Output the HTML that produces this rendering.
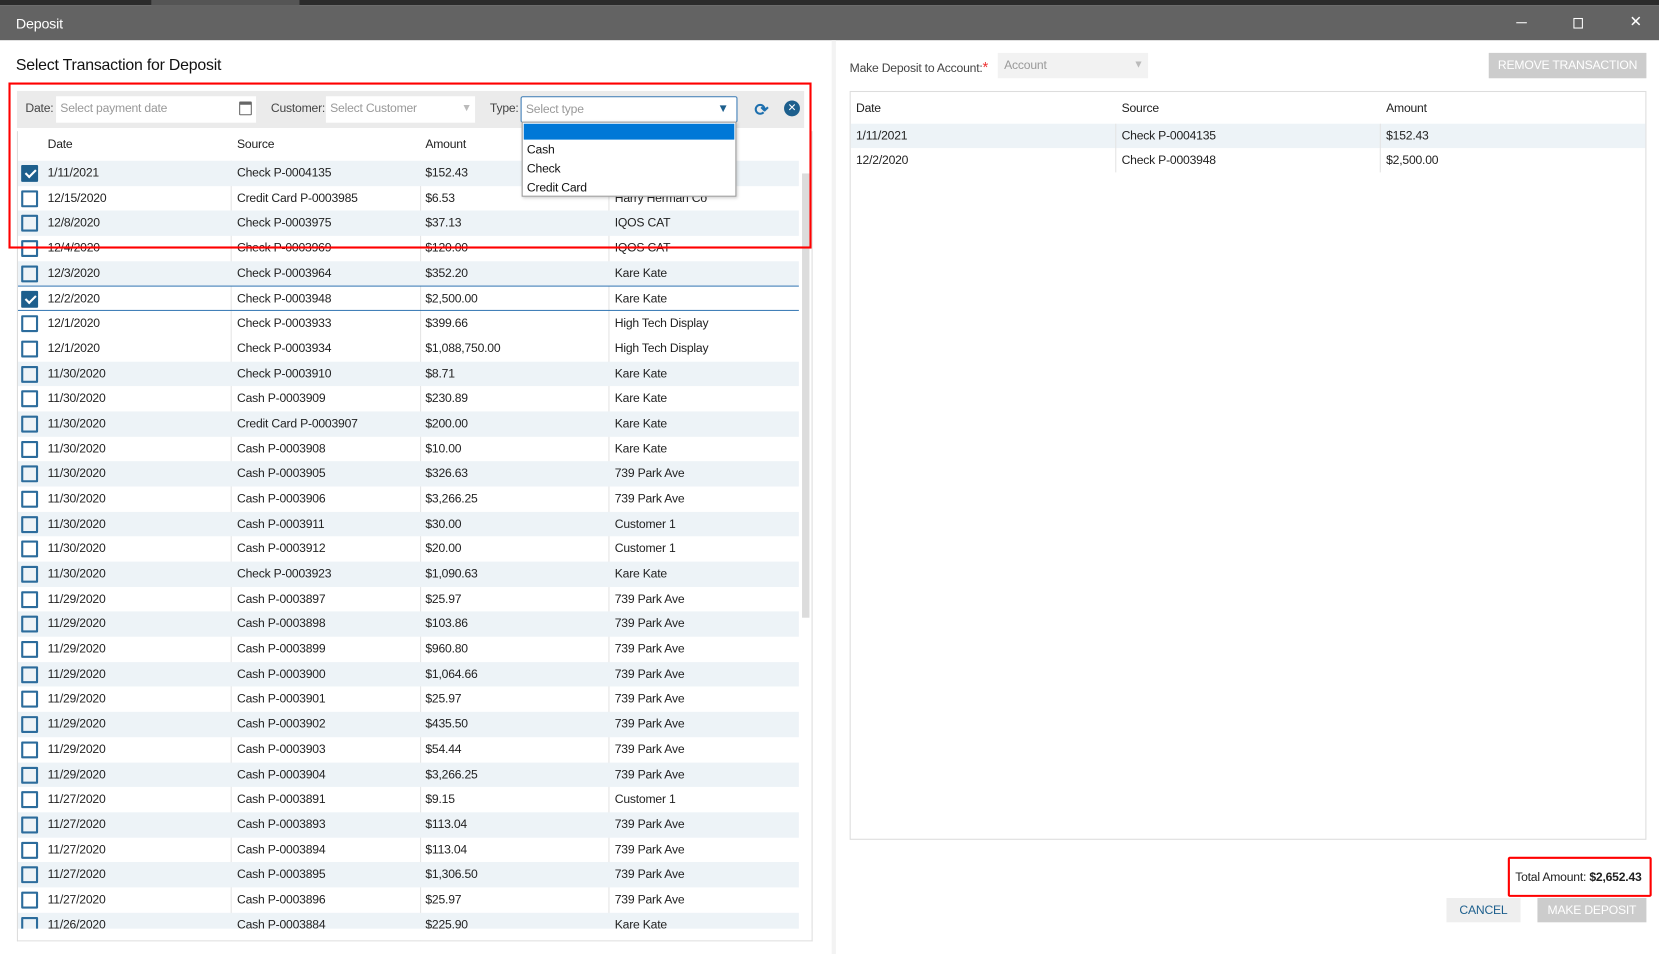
<!DOCTYPE html>
<html><head><meta charset="utf-8"><style>
*{box-sizing:border-box;margin:0;padding:0}
body{width:1659px;height:954px;overflow:hidden;background:#fff;font-family:"Liberation Sans",sans-serif;color:#222}
#s{position:absolute;left:0;top:0;width:1568px;height:902px;transform:scale(1.0581,1.0577);transform-origin:0 0;font-size:11.5px;letter-spacing:-0.2px}
.a{position:absolute}
.row{height:23.69px;display:flex;align-items:center;position:relative;white-space:nowrap}
.row.o{background:#edf3f7}
.row span{position:absolute;top:6px}
.c1{left:28px}.c2{left:207px}.c3{left:385px}.c4{left:564px}
.cb{position:absolute;left:3px;top:4px;width:16px;height:16px;border:2px solid #2c6c9c;border-radius:1px}
.cb.k{background:#1d5f8d;border-color:#1d5f8d}
.cb.k:after{content:"";position:absolute;left:4px;top:0px;width:4px;height:8px;border:solid #fff;border-width:0 2px 2px 0;transform:rotate(45deg)}
.vl{position:absolute;top:0;bottom:0;width:1px;background:#e4e4e4}
</style></head><body><div id="s">
<div class="a" style="left:0;top:0;width:1568px;height:5px;background:#2b2b2b"></div>
<div class="a" style="left:143px;top:0;width:140px;height:5px;background:#555"></div>
<div class="a" style="left:0;top:5px;width:1568px;height:33px;background:#636363"></div>
<div class="a" style="left:15px;top:15px;color:#fff;font-size:13.5px">Deposit</div>
<div class="a" style="left:1433px;top:21px;width:10px;height:1px;background:#fff"></div>
<div class="a" style="left:1487px;top:17px;width:9px;height:10px;border:1px solid #fff"></div>
<div class="a" style="left:1540px;top:12px;color:#fff;font-size:14px">✕</div>

<div class="a" style="left:15px;top:53px;font-size:15px;color:#111">Select Transaction for Deposit</div>
<div class="a" style="left:16px;top:86px;width:744px;height:35px;background:#ebebeb"></div>
<div class="a" style="left:24px;top:97px;color:#444">Date:</div>
<div class="a" style="left:53px;top:91px;width:189px;height:25px;background:#fff;color:#999;padding:6px 4px">Select payment date</div>
<div class="a" style="left:226px;top:96px;width:12px;height:13px;border:1.5px solid #666;border-top-width:3px;border-radius:1px"></div>
<div class="a" style="left:256px;top:97px;color:#444">Customer:</div>
<div class="a" style="left:308px;top:91px;width:141px;height:25px;background:#fff;color:#999;padding:6px 4px">Select Customer</div>
<div class="a" style="left:436px;top:97px;color:#bbb;font-size:10px">▼</div>
<div class="a" style="left:463px;top:97px;color:#444">Type:</div>
<div class="a" style="left:492px;top:91px;width:205px;height:25px;background:#fff;border:1px solid #3b7bb5;border-radius:2px;color:#999;padding:6px 4px">Select type</div>
<div class="a" style="left:678px;top:97px;color:#1d5f8d;font-size:11px">▼</div>
<div class="a" style="left:713px;top:94px;color:#1d6fae;font-size:16px;font-weight:bold">⟳</div>
<div class="a" style="left:741px;top:95px;width:15px;height:15px;border-radius:50%;background:#1d5f8d;color:#fff;font-size:10px;text-align:center;line-height:15px">✕</div>

<div class="a" style="left:16px;top:124px;width:752px;height:766px;border:1px solid #ddd;border-top:none;overflow:hidden">
<div class="a" style="left:28px;top:7px">Date</div>
<div class="a" style="left:207px;top:7px">Source</div>
<div class="a" style="left:385px;top:7px">Amount</div>
<div class="a" style="left:0;top:28px;width:738px">
<div class="vl" style="left:201px;height:740px"></div><div class="vl" style="left:380px;height:740px"></div><div class="vl" style="left:558px;height:740px"></div>
<div class="row o"><i class="cb k"></i><span class="c1">1/11/2021</span><span class="c2">Check P-0004135</span><span class="c3">$152.43</span></div>
<div class="row"><i class="cb"></i><span class="c1">12/15/2020</span><span class="c2">Credit Card P-0003985</span><span class="c3">$6.53</span><span class="c4">Harry Herman Co</span></div>
<div class="row o"><i class="cb"></i><span class="c1">12/8/2020</span><span class="c2">Check P-0003975</span><span class="c3">$37.13</span><span class="c4">IQOS CAT</span></div>
<div class="row"><i class="cb"></i><span class="c1">12/4/2020</span><span class="c2">Check P-0003969</span><span class="c3">$120.00</span><span class="c4">IQOS CAT</span></div>
<div class="row o"><i class="cb"></i><span class="c1">12/3/2020</span><span class="c2">Check P-0003964</span><span class="c3">$352.20</span><span class="c4">Kare Kate</span></div>
<div class="row" style="border-top:1px solid #3b7bb5;border-bottom:1px solid #3b7bb5"><i class="cb k"></i><span class="c1">12/2/2020</span><span class="c2">Check P-0003948</span><span class="c3">$2,500.00</span><span class="c4">Kare Kate</span></div>
<div class="row"><i class="cb"></i><span class="c1">12/1/2020</span><span class="c2">Check P-0003933</span><span class="c3">$399.66</span><span class="c4">High Tech Display</span></div>
<div class="row"><i class="cb"></i><span class="c1">12/1/2020</span><span class="c2">Check P-0003934</span><span class="c3">$1,088,750.00</span><span class="c4">High Tech Display</span></div>
<div class="row o"><i class="cb"></i><span class="c1">11/30/2020</span><span class="c2">Check P-0003910</span><span class="c3">$8.71</span><span class="c4">Kare Kate</span></div>
<div class="row"><i class="cb"></i><span class="c1">11/30/2020</span><span class="c2">Cash P-0003909</span><span class="c3">$230.89</span><span class="c4">Kare Kate</span></div>
<div class="row o"><i class="cb"></i><span class="c1">11/30/2020</span><span class="c2">Credit Card P-0003907</span><span class="c3">$200.00</span><span class="c4">Kare Kate</span></div>
<div class="row"><i class="cb"></i><span class="c1">11/30/2020</span><span class="c2">Cash P-0003908</span><span class="c3">$10.00</span><span class="c4">Kare Kate</span></div>
<div class="row o"><i class="cb"></i><span class="c1">11/30/2020</span><span class="c2">Cash P-0003905</span><span class="c3">$326.63</span><span class="c4">739 Park Ave</span></div>
<div class="row"><i class="cb"></i><span class="c1">11/30/2020</span><span class="c2">Cash P-0003906</span><span class="c3">$3,266.25</span><span class="c4">739 Park Ave</span></div>
<div class="row o"><i class="cb"></i><span class="c1">11/30/2020</span><span class="c2">Cash P-0003911</span><span class="c3">$30.00</span><span class="c4">Customer 1</span></div>
<div class="row"><i class="cb"></i><span class="c1">11/30/2020</span><span class="c2">Cash P-0003912</span><span class="c3">$20.00</span><span class="c4">Customer 1</span></div>
<div class="row o"><i class="cb"></i><span class="c1">11/30/2020</span><span class="c2">Check P-0003923</span><span class="c3">$1,090.63</span><span class="c4">Kare Kate</span></div>
<div class="row"><i class="cb"></i><span class="c1">11/29/2020</span><span class="c2">Cash P-0003897</span><span class="c3">$25.97</span><span class="c4">739 Park Ave</span></div>
<div class="row o"><i class="cb"></i><span class="c1">11/29/2020</span><span class="c2">Cash P-0003898</span><span class="c3">$103.86</span><span class="c4">739 Park Ave</span></div>
<div class="row"><i class="cb"></i><span class="c1">11/29/2020</span><span class="c2">Cash P-0003899</span><span class="c3">$960.80</span><span class="c4">739 Park Ave</span></div>
<div class="row o"><i class="cb"></i><span class="c1">11/29/2020</span><span class="c2">Cash P-0003900</span><span class="c3">$1,064.66</span><span class="c4">739 Park Ave</span></div>
<div class="row"><i class="cb"></i><span class="c1">11/29/2020</span><span class="c2">Cash P-0003901</span><span class="c3">$25.97</span><span class="c4">739 Park Ave</span></div>
<div class="row o"><i class="cb"></i><span class="c1">11/29/2020</span><span class="c2">Cash P-0003902</span><span class="c3">$435.50</span><span class="c4">739 Park Ave</span></div>
<div class="row"><i class="cb"></i><span class="c1">11/29/2020</span><span class="c2">Cash P-0003903</span><span class="c3">$54.44</span><span class="c4">739 Park Ave</span></div>
<div class="row o"><i class="cb"></i><span class="c1">11/29/2020</span><span class="c2">Cash P-0003904</span><span class="c3">$3,266.25</span><span class="c4">739 Park Ave</span></div>
<div class="row"><i class="cb"></i><span class="c1">11/27/2020</span><span class="c2">Cash P-0003891</span><span class="c3">$9.15</span><span class="c4">Customer 1</span></div>
<div class="row o"><i class="cb"></i><span class="c1">11/27/2020</span><span class="c2">Cash P-0003893</span><span class="c3">$113.04</span><span class="c4">739 Park Ave</span></div>
<div class="row"><i class="cb"></i><span class="c1">11/27/2020</span><span class="c2">Cash P-0003894</span><span class="c3">$113.04</span><span class="c4">739 Park Ave</span></div>
<div class="row o"><i class="cb"></i><span class="c1">11/27/2020</span><span class="c2">Cash P-0003895</span><span class="c3">$1,306.50</span><span class="c4">739 Park Ave</span></div>
<div class="row"><i class="cb"></i><span class="c1">11/27/2020</span><span class="c2">Cash P-0003896</span><span class="c3">$25.97</span><span class="c4">739 Park Ave</span></div>
<div class="row o"><i class="cb"></i><span class="c1">11/26/2020</span><span class="c2">Cash P-0003884</span><span class="c3">$225.90</span><span class="c4">Kare Kate</span></div>
</div>
<div class="a" style="left:0;top:754px;width:752px;height:20px;background:#fff"></div>
<div class="a" style="left:741px;top:40px;width:7px;height:420px;background:#dcdcdc"></div>
</div>

<div class="a" style="left:493px;top:115px;width:203px;height:71px;background:#fff;border:1px solid #999;box-shadow:1px 1px 3px rgba(0,0,0,.2)">
<div style="margin:1px;height:15px;background:#0078d7"></div>
<div style="padding:0 4px;line-height:18px;color:#111">Cash<br>Check<br>Credit Card</div></div>
<div class="a" style="left:8px;top:78px;width:759px;height:157px;border:2px solid #f00"></div>

<div class="a" style="left:786px;top:38px;width:4px;height:864px;background:#f3f3f3"></div>
<div class="a" style="left:803px;top:55px;color:#444">Make Deposit to Account:<span style="color:#e33;font-size:14px">*</span></div>
<div class="a" style="left:943px;top:50px;width:142px;height:24px;background:#f2f2f2;color:#999;padding:6px 6px">Account</div>
<div class="a" style="left:1071px;top:56px;color:#bbb;font-size:10px">▼</div>
<div class="a" style="left:1407px;top:50px;width:149px;height:24px;background:#ccc;color:#fff;text-align:center;line-height:24px">REMOVE TRANSACTION</div>
<div class="a" style="left:803px;top:86px;width:753px;height:708px;border:1px solid #ddd">
<div class="a" style="left:5px;top:10px">Date</div><div class="a" style="left:256px;top:10px">Source</div><div class="a" style="left:506px;top:10px">Amount</div>
<div class="a" style="left:0;top:30px;width:751px;height:23px;background:#edf3f7"></div>
<div class="a" style="left:250px;top:30px;width:1px;height:46px;background:#e4e4e4"></div>
<div class="a" style="left:500px;top:30px;width:1px;height:46px;background:#e4e4e4"></div>
<div class="a" style="left:5px;top:36px">1/11/2021</div><div class="a" style="left:256px;top:36px">Check P-0004135</div><div class="a" style="left:506px;top:36px">$152.43</div>
<div class="a" style="left:5px;top:59px">12/2/2020</div><div class="a" style="left:256px;top:59px">Check P-0003948</div><div class="a" style="left:506px;top:59px">$2,500.00</div>
</div>
<div class="a" style="left:1425px;top:810px;width:136px;height:38px;border:2px solid #f00;border-radius:2px;padding:12px 0 0 5px;white-space:nowrap">Total Amount: <b>$2,652.43</b></div>
<div class="a" style="left:1367px;top:849px;width:70px;height:23px;background:#eee;color:#1d5f8d;text-align:center;line-height:24px">CANCEL</div>
<div class="a" style="left:1453px;top:849px;width:103px;height:23px;background:#ccc;color:#fff;text-align:center;line-height:24px">MAKE DEPOSIT</div>
</div></body></html>
